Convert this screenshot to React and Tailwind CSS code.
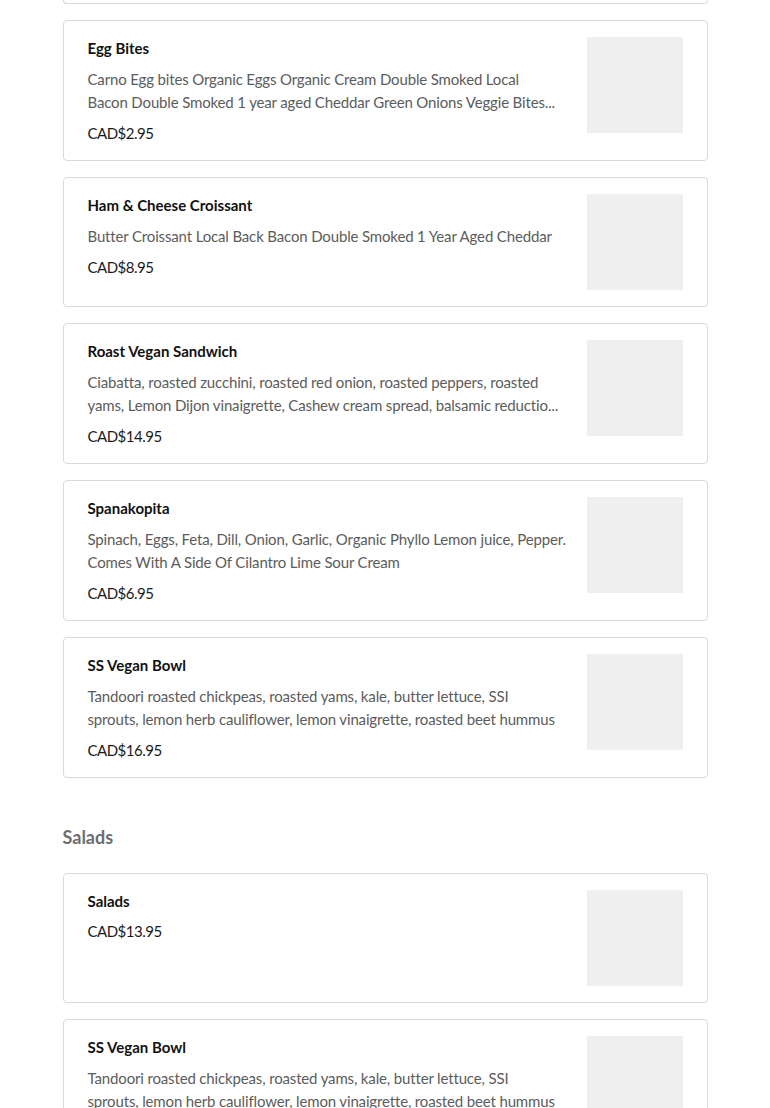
import React from 'react';

const font = { fontFamily: 'Lato, "Open Sans", sans-serif' };

// descriptions are split where the menu wraps them; long ones are cut after two lines
const items = [
  {
    name: 'Egg Bites',
    desc: [
      'Carno Egg bites Organic Eggs Organic Cream Double Smoked Local',
      'Bacon Double Smoked 1 year aged Cheddar Green Onions Veggie Bites...',
    ],
    price: 'CAD$2.95',
  },
  {
    name: 'Ham & Cheese Croissant',
    desc: ['Butter Croissant Local Back Bacon Double Smoked 1 Year Aged Cheddar'],
    price: 'CAD$8.95',
  },
  {
    name: 'Roast Vegan Sandwich',
    desc: [
      'Ciabatta, roasted zucchini, roasted red onion, roasted peppers, roasted',
      'yams, Lemon Dijon vinaigrette, Cashew cream spread, balsamic reductio...',
    ],
    price: 'CAD$14.95',
  },
  {
    name: 'Spanakopita',
    desc: [
      'Spinach, Eggs, Feta, Dill, Onion, Garlic, Organic Phyllo Lemon juice, Pepper.',
      'Comes With A Side Of Cilantro Lime Sour Cream',
    ],
    price: 'CAD$6.95',
  },
  {
    name: 'SS Vegan Bowl',
    desc: [
      'Tandoori roasted chickpeas, roasted yams, kale, butter lettuce, SSI',
      'sprouts, lemon herb cauliflower, lemon vinaigrette, roasted beet hummus',
    ],
    price: 'CAD$16.95',
  },
];

const salads = [
  { name: 'Salads', price: 'CAD$13.95' },
  {
    name: 'SS Vegan Bowl',
    desc: [
      'Tandoori roasted chickpeas, roasted yams, kale, butter lettuce, SSI',
      'sprouts, lemon herb cauliflower, lemon vinaigrette, roasted beet hummus',
    ],
    price: 'CAD$16.95',
  },
];

const ItemCard = ({ item }) => (
  <div className="flex gap-5 rounded border border-[#d9d9d9] bg-white px-6 py-4">
    <div className="flex min-w-0 flex-1 flex-col">
      <div className="text-[15px] font-bold leading-[22px] text-[#111]">{item.name}</div>
      {item.desc && (
        <div className="mt-[9px] text-[15px] leading-[23px] tracking-[-0.15px] text-[#5c5c5c]">
          {item.desc.map((line, i) => (
            <div key={i} className="whitespace-nowrap">
              {line}
            </div>
          ))}
        </div>
      )}
      <div className="mt-2 text-[15px] leading-[22px] tracking-[-0.5px] text-[#1a1a1a]">{item.price}</div>
    </div>
    <div className="h-24 w-24 shrink-0 bg-[#efefef]" />
  </div>
);

export default function App() {
  return (
    <div className="min-h-screen bg-white" style={font}>
      <div className="mx-auto w-[645px]">
        <div className="h-[4px] rounded-b border-x border-b border-[#d9d9d9]" />
        <div className="mt-4 flex flex-col gap-4">
          {items.map((item, i) => (
            <ItemCard key={i} item={item} />
          ))}
        </div>
        <h2 className="mt-[47px] text-[18px] font-bold leading-6 text-[#6e6e6e]">Salads</h2>
        <div className="mt-6 flex flex-col gap-4 pb-10">
          {salads.map((item, i) => (
            <ItemCard key={i} item={item} />
          ))}
        </div>
      </div>
    </div>
  );
}
